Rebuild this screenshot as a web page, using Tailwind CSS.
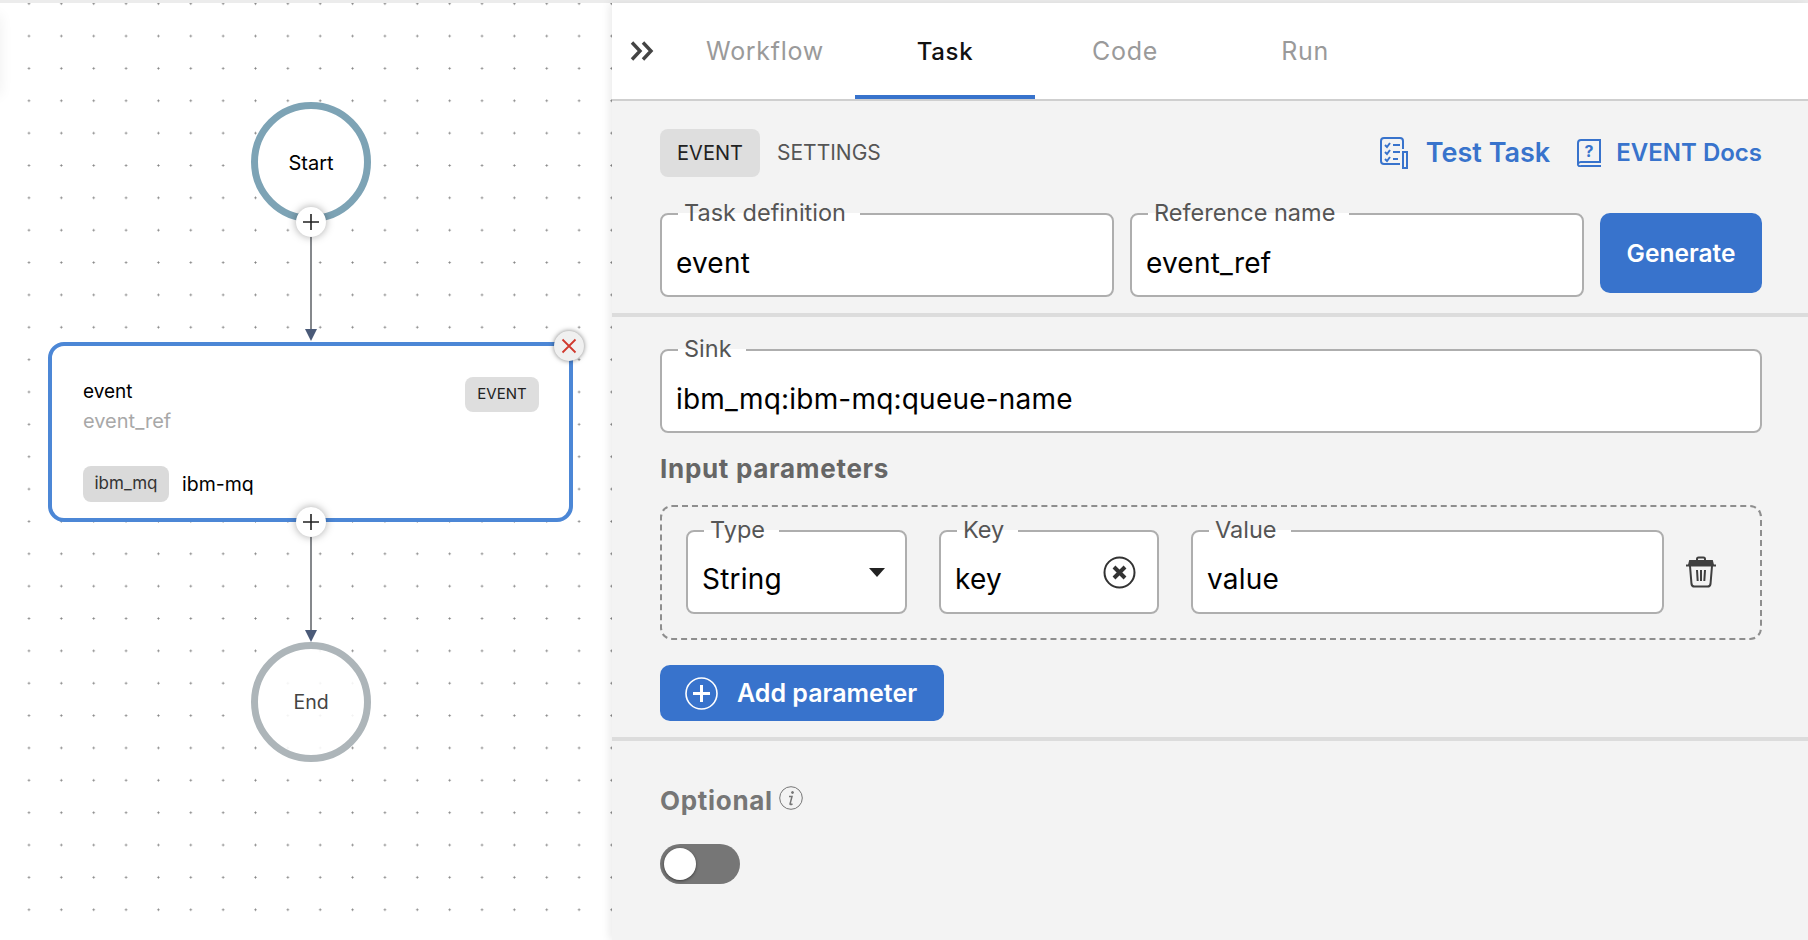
<!DOCTYPE html>
<html lang="en">
<head>
  <meta charset="UTF-8">
  <meta name="viewport" content="width=device-width,initial-scale=1.0">
  <title>Workflow - Task</title>
  <script src="https://cdn.jsdelivr.net/npm/@tailwindcss/browser@4"></script>
</head>
<body class="h-screen overflow-hidden bg-white font-['Inter',sans-serif] text-black">
  <div class="h-[3px] bg-[#ececec]"></div>
  <div class="flex h-[937px]">

    <!-- Diagram canvas -->
    <div class="relative w-[612px] shrink-0 overflow-hidden bg-white bg-[radial-gradient(circle,#808080_0.8px,transparent_1.3px)] bg-[size:32.36px_32.36px] bg-[position:12.8px_-15.5px]">
      <div class="absolute -left-3 top-3 h-[80px] w-3 bg-white shadow-[0_0_14px_rgba(0,0,0,0.07)]"></div>

      <!-- Start -->
      <div class="absolute left-[251px] top-[99px] flex h-[120px] w-[120px] items-center justify-center rounded-full border-[7px] border-[#7da3b5] bg-white pt-[2px] text-[20px]">Start</div>
      <div class="absolute left-[310px] top-[233px] h-[94px] w-[2px] bg-[#85888c]"></div>
      <svg class="absolute left-[305px] top-[326px]" width="12" height="12" viewBox="0 0 12 12"><path d="M0 0h12L6 12z" fill="#4a5a78"/></svg>
      <div class="absolute left-[296px] top-[204px] flex h-[30px] w-[30px] items-center justify-center rounded-full bg-white shadow-[0_0_8px_rgba(0,0,0,0.35)]">
        <svg width="18" height="18" viewBox="0 0 18 18"><path d="M9 1v16M1 9h16" stroke="#222" stroke-width="1.6"/></svg>
      </div>

      <!-- Event task node -->
      <div class="absolute left-[48px] top-[339px] h-[180px] w-[525px] rounded-[16px] border-4 border-[#4c87d6] bg-white">
        <div class="absolute left-[31px] top-[32px] text-[19px] leading-[28px]">event</div>
        <div class="absolute left-[31px] top-[61px] text-[20px] leading-[28px] text-[#a8a8a8]">event_ref</div>
        <div class="absolute left-[413px] top-[31px] flex h-[35px] w-[74px] items-center justify-center rounded-lg bg-[#dedede] text-[15px] text-[#222]">EVENT</div>
        <div class="absolute left-[31px] top-[120px] flex items-center gap-[13px]">
          <div class="flex h-[36px] w-[86px] items-center justify-center rounded-lg bg-[#dadada] text-[17px] text-[#333]">ibm_mq</div>
          <div class="pt-[2px] text-[19.5px]">ibm-mq</div>
        </div>
      </div>
      <div class="absolute left-[554px] top-[328px] flex h-[30px] w-[30px] items-center justify-center rounded-full bg-[#f0f0f0] shadow-[0_0_5px_rgba(0,0,0,0.5)]">
        <svg width="16" height="16" viewBox="0 0 16 16"><path d="M1.500 1.500l13 13M14.500 1.500l-13 13" stroke="#d0392e" stroke-width="1.8"/></svg>
      </div>
      <div class="absolute left-[310px] top-[533px] h-[94px] w-[2px] bg-[#85888c]"></div>
      <svg class="absolute left-[305px] top-[627px]" width="12" height="12" viewBox="0 0 12 12"><path d="M0 0h12L6 12z" fill="#4a5a78"/></svg>
      <div class="absolute left-[296px] top-[504px] flex h-[30px] w-[30px] items-center justify-center rounded-full bg-white shadow-[0_0_8px_rgba(0,0,0,0.35)]">
        <svg width="18" height="18" viewBox="0 0 18 18"><path d="M9 1v16M1 9h16" stroke="#222" stroke-width="1.6"/></svg>
      </div>

      <!-- End -->
      <div class="absolute left-[251px] top-[639px] flex h-[120px] w-[120px] items-center justify-center rounded-full border-[7px] border-[#adb5b9] bg-white/90 pt-[2px] text-[19.5px] text-[#444]">End</div>
    </div>

    <!-- Task panel -->
    <div class="relative flex-1 bg-[#f3f3f3] shadow-[-3px_0_8px_rgba(0,0,0,0.08)]">
      <!-- Tabs -->
      <div class="flex h-[98px] border-b-2 border-[#cfcfcf] bg-white">
        <div class="flex w-[63px] items-center justify-end pr-[21px]">
          <svg width="24" height="20" viewBox="0 0 24 20" fill="none" stroke="#444" stroke-width="3.4"><path d="M2 1.500L10 10L2 18.500M13 1.500L21 10L13 18.500"/></svg>
        </div>
        <div class="flex w-[180px] items-center justify-center pt-[2px] text-[25px] tracking-[0.7px] text-[#9a9a9a]">Workflow</div>
        <div class="flex w-[180px] items-center justify-center border-b-4 border-[#3873cc] pt-[6px] text-[24px] font-medium tracking-[0.7px] text-[#111]">Task</div>
        <div class="flex w-[180px] items-center justify-center pt-[2px] text-[25px] tracking-[0.7px] text-[#9a9a9a]">Code</div>
        <div class="flex w-[180px] items-center justify-center pt-[2px] text-[25px] tracking-[0.7px] text-[#9a9a9a]">Run</div>
      </div>

      <!-- Name section -->
      <div class="border-b-4 border-[#dcdcdc] pb-[16px] pl-[48px] pr-[46px] pt-[28px]">
        <div class="flex h-[48px] items-center">
          <div class="flex h-[48px] w-[100px] items-center justify-center rounded-lg bg-[#dedede] text-[20px] text-[#222]">EVENT</div>
          <div class="ml-[17px] text-[21px] text-[#555]">SETTINGS</div>
          <div class="ml-auto flex items-center text-[#3873cc]">
            <svg width="28" height="32" viewBox="0 0 28 32" fill="none" stroke="#3873cc" stroke-width="2"><path d="M20 27H4a3 3 0 0 1-3-3V4a3 3 0 0 1 3-3h16a3 3 0 0 1 3 3v8"/><path d="M5 8l2 2 3-4M5 15l2 2 3-4M5 22l2 2 3-4M13 8h7M13 15h7M13 22h5"/><path d="M23 15h4v16h-4z"/></svg>
            <span class="ml-[18px] text-[27px] font-semibold">Test Task</span>
            <svg class="ml-[26px]" width="26" height="28" viewBox="0 0 26 28" fill="none" stroke="#3873cc" stroke-width="2"><path d="M5 1h19v22H5a3 3 0 0 0-3 2V4a3 3 0 0 1 3-3z"/><path d="M2 25a2 2 0 0 0 3 2h20"/><text x="13" y="18" text-anchor="middle" fill="#3873cc" stroke="none" font-size="16" font-weight="700">?</text></svg>
            <span class="ml-[14px] text-[24px] font-semibold">EVENT Docs</span>
          </div>
        </div>
        <div class="mt-[25px] flex items-start">
          <fieldset class="h-[95px] w-[454px] rounded-lg border-2 border-[#aeaeae] bg-white px-[14px]">
            <legend class="ml-[2px] pb-[2px] pl-[6px] pr-[14px] text-[23.5px] leading-[22px] text-[#555]">Task definition</legend>
            <div class="mt-[19px] text-[28px] leading-[36px] tracking-[0.2px]">event</div>
          </fieldset>
          <fieldset class="ml-[16px] h-[95px] w-[454px] rounded-lg border-2 border-[#aeaeae] bg-white px-[14px]">
            <legend class="ml-[2px] pb-[2px] pl-[6px] pr-[14px] text-[23.5px] leading-[22px] text-[#555]">Reference name</legend>
            <div class="mt-[19px] text-[28px] leading-[36px] tracking-[0.2px]">event_ref</div>
          </fieldset>
          <div class="ml-[16px] mt-[11px] flex h-[80px] w-[162px] items-center justify-center rounded-[10px] bg-[#3873cc] pt-[1px] text-[24.5px] font-semibold text-white">Generate</div>
        </div>
      </div>

      <!-- Sink and parameters -->
      <div class="border-b-4 border-[#dcdcdc] pb-4 pl-[48px] pr-[46px] pt-[21px]">
        <fieldset class="h-[95px] rounded-lg border-2 border-[#aeaeae] bg-white px-[14px]">
          <legend class="ml-[2px] pb-[2px] pl-[6px] pr-[14px] text-[23.5px] leading-[22px] text-[#555]">Sink</legend>
          <div class="mt-[19px] text-[28px] leading-[36px] tracking-[0.2px]">ibm_mq:ibm-mq:queue-name</div>
        </fieldset>
        <div class="mt-5 text-[26px] font-bold leading-[32px] tracking-[0.7px] text-[#666]">Input parameters</div>
        <div class="mt-5 flex h-[135px] items-start rounded-xl border-2 border-dashed border-[#8e8e8e] pl-[24px] pt-[12px]">
          <fieldset class="h-[95px] w-[221px] rounded-lg border-2 border-[#aeaeae] bg-white px-[14px]">
            <legend class="ml-[2px] pb-[2px] pl-[6px] pr-[14px] text-[23.5px] leading-[22px] text-[#555]">Type</legend>
            <div class="mt-[18px] flex h-[36px] justify-between text-[28px] leading-[36px] tracking-[0.2px]">
              <span>String</span>
              <svg class="mr-[6px] mt-[7px] self-start" width="16" height="9" viewBox="0 0 16 9"><path d="M0 0h16L8 9z" fill="#222"/></svg>
            </div>
          </fieldset>
          <fieldset class="ml-[32px] h-[95px] w-[220px] rounded-lg border-2 border-[#aeaeae] bg-white px-[14px]">
            <legend class="ml-[2px] pb-[2px] pl-[6px] pr-[14px] text-[23.5px] leading-[22px] text-[#555]">Key</legend>
            <div class="mt-[18px] flex h-[36px] justify-between text-[28px] leading-[36px] tracking-[0.2px]">
              <span>key</span>
              <svg class="-mt-[5px] mr-[7px] self-start" width="33" height="33" viewBox="0 0 33 33" fill="none" stroke="#333"><circle cx="16.500" cy="16.500" r="15" stroke-width="2"/><path d="M11 11l11 11M22 11L11 22" stroke-width="4"/></svg>
            </div>
          </fieldset>
          <fieldset class="ml-[32px] h-[95px] w-[473px] rounded-lg border-2 border-[#aeaeae] bg-white px-[14px]">
            <legend class="ml-[2px] pb-[2px] pl-[6px] pr-[14px] text-[23.5px] leading-[22px] text-[#555]">Value</legend>
            <div class="mt-[18px] text-[28px] leading-[36px] tracking-[0.2px]">value</div>
          </fieldset>
          <svg class="ml-[21px] mt-[37px]" width="32" height="32" viewBox="0 0 32 32" fill="none" stroke="#3f3f3f" stroke-width="2"><path d="M12 4.500V3a1.500 1.500 0 0 1 1.500-1.500h5A1.500 1.500 0 0 1 20 3v1.500"/><path d="M5 5h22l1 4H4z" fill="#3f3f3f"/><path d="M1 9.500h30"/><path d="M5 10l1.500 18a3 3 0 0 0 3 2.500h13a3 3 0 0 0 3-2.500L27 10"/><path d="M12 14l.7 11M16 14v11M20 14l-.7 11"/></svg>
        </div>
        <div class="mt-[25px] flex h-[56px] w-[284px] items-center rounded-[10px] bg-[#3873cc] pl-[25px] text-[25px] font-semibold text-white">
          <svg width="33" height="33" viewBox="0 0 33 33" fill="none" stroke="#fff"><circle cx="16.500" cy="16.500" r="15.500" stroke-width="1.600"/><path d="M16.500 8v17M8 16.500h17" stroke-width="3"/></svg>
          <span class="ml-[19px] pt-[2px]">Add parameter</span>
        </div>
      </div>

      <!-- Optional -->
      <div class="pl-[48px] pt-[43px]">
        <div class="flex items-start">
          <span class="pt-[1px] text-[26px] font-bold leading-[32px] tracking-[0.7px] text-[#767676]">Optional</span>
          <svg class="ml-[6px] mt-[2px]" width="24" height="24" viewBox="0 0 24 24" fill="none" stroke="#767676"><circle cx="12" cy="12" r="11.300" stroke-width="1"/><path d="M10 10.500h3l-2 7.500q0 1 2.500 0" stroke-width="1.500"/><circle cx="13.500" cy="6.500" r="1" fill="#767676"/></svg>
        </div>
        <div class="mt-[27px] flex h-[40px] w-[80px] items-center rounded-full bg-[#767676] pl-1">
          <div class="h-[32px] w-[32px] rounded-full bg-white shadow-[0_1px_3px_rgba(0,0,0,0.5)]"></div>
        </div>
      </div>
    </div>
  </div>
</body>
</html>
